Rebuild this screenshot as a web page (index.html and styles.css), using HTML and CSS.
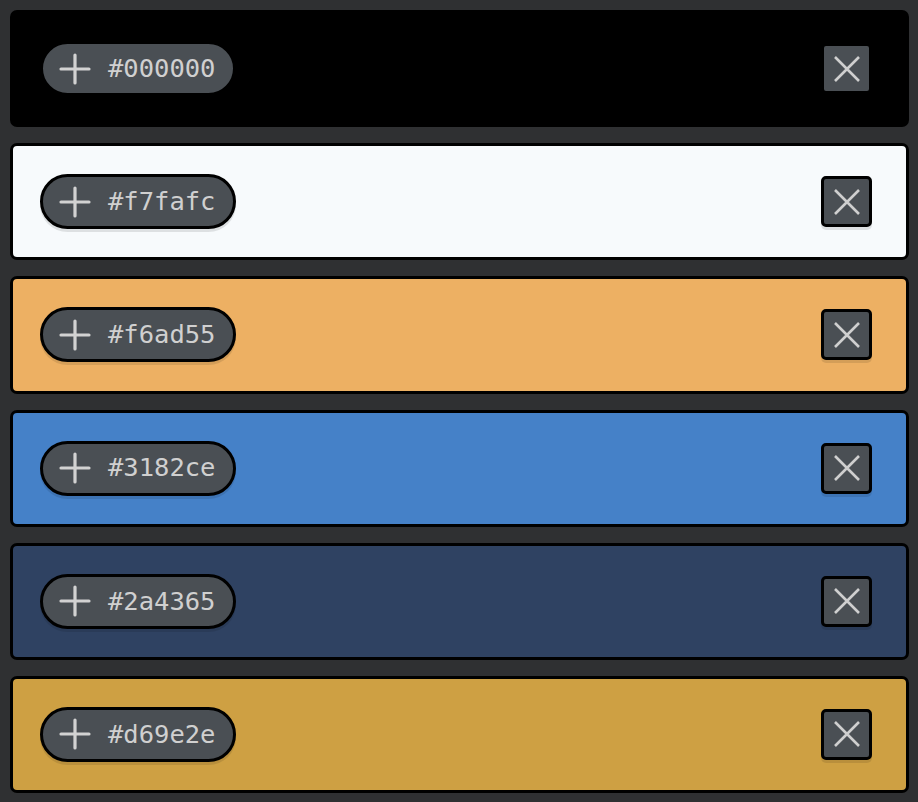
FILE: index.html
```html
<!DOCTYPE html>
<html>
<head>
<meta charset="utf-8">
<link rel="stylesheet" href="styles.css">
</head>
<body>
<div class="list">
  <div class="card c-black">
    <button class="pill"><svg class="plus" viewBox="0 0 32 32"><path d="M16 2V30M2 16H30"/></svg><span class="hex">#000000</span></button>
    <button class="close"><svg viewBox="0 0 44 44"><path d="M10 10L34 34M34 10L10 34"/></svg></button>
  </div>
  <div class="card c-white">
    <button class="pill"><svg class="plus" viewBox="0 0 32 32"><path d="M16 2V30M2 16H30"/></svg><span class="hex">#f7fafc</span></button>
    <button class="close"><svg viewBox="0 0 44 44"><path d="M10 10L34 34M34 10L10 34"/></svg></button>
  </div>
  <div class="card c-orange">
    <button class="pill"><svg class="plus" viewBox="0 0 32 32"><path d="M16 2V30M2 16H30"/></svg><span class="hex">#f6ad55</span></button>
    <button class="close"><svg viewBox="0 0 44 44"><path d="M10 10L34 34M34 10L10 34"/></svg></button>
  </div>
  <div class="card c-blue">
    <button class="pill"><svg class="plus" viewBox="0 0 32 32"><path d="M16 2V30M2 16H30"/></svg><span class="hex">#3182ce</span></button>
    <button class="close"><svg viewBox="0 0 44 44"><path d="M10 10L34 34M34 10L10 34"/></svg></button>
  </div>
  <div class="card c-navy">
    <button class="pill"><svg class="plus" viewBox="0 0 32 32"><path d="M16 2V30M2 16H30"/></svg><span class="hex">#2a4365</span></button>
    <button class="close"><svg viewBox="0 0 44 44"><path d="M10 10L34 34M34 10L10 34"/></svg></button>
  </div>
  <div class="card c-gold">
    <button class="pill"><svg class="plus" viewBox="0 0 32 32"><path d="M16 2V30M2 16H30"/></svg><span class="hex">#d69e2e</span></button>
    <button class="close"><svg viewBox="0 0 44 44"><path d="M10 10L34 34M34 10L10 34"/></svg></button>
  </div>
</div>
</body>
</html>
```

FILE: styles.css
```css
html, body {
  margin: 0;
  height: 100%;
  background: #2f3032;
}
body {
  box-sizing: border-box;
  padding: 10px 9px 9px 10px;
}
.list {
  height: 100%;
  display: flex;
  flex-direction: column;
  gap: 16px;
}
.card {
  flex: 1;
  box-sizing: border-box;
  border: 3px solid #000;
  border-radius: 7px;
  display: flex;
  align-items: center;
  justify-content: space-between;
  padding: 0 34px 0 27px;
}
.c-black { background: #000000; }
.c-white { background: #f7fafc; }
.c-orange { background: #edb063; }
.c-blue { background: #4581c8; }
.c-navy { background: #2f4262; }
.c-gold { background: #cea043; }

.pill {
  display: flex;
  align-items: center;
  gap: 17px;
  height: 55px;
  box-sizing: border-box;
  padding: 0 18px 0 16px;
  border: 3px solid #000;
  border-radius: 28px;
  background: #4a4f54;
  box-shadow: 0 3px 0 rgba(0, 0, 0, 0.1);
  margin: 0;
  cursor: pointer;
}
.plus {
  width: 32px;
  height: 32px;
  display: block;
}
.plus path {
  stroke: #d2d2d2;
  stroke-width: 3.2;
  stroke-linecap: round;
  fill: none;
}
.hex {
  font-family: "DejaVu Sans Mono", "Liberation Mono", monospace;
  font-size: 25.5px;
  line-height: 1;
  color: #d0d0d0;
}
.close {
  width: 51px;
  height: 51px;
  box-sizing: border-box;
  border: 3px solid #000;
  border-radius: 5px;
  background: #4a4f54;
  box-shadow: 0 3px 0 rgba(0, 0, 0, 0.1);
  padding: 0;
  margin: 0;
  display: flex;
  align-items: center;
  justify-content: center;
}
.close svg {
  width: 44px;
  height: 44px;
  display: block;
}
.close path {
  stroke: #cfcfcf;
  stroke-width: 2.6;
  fill: none;
}
```
